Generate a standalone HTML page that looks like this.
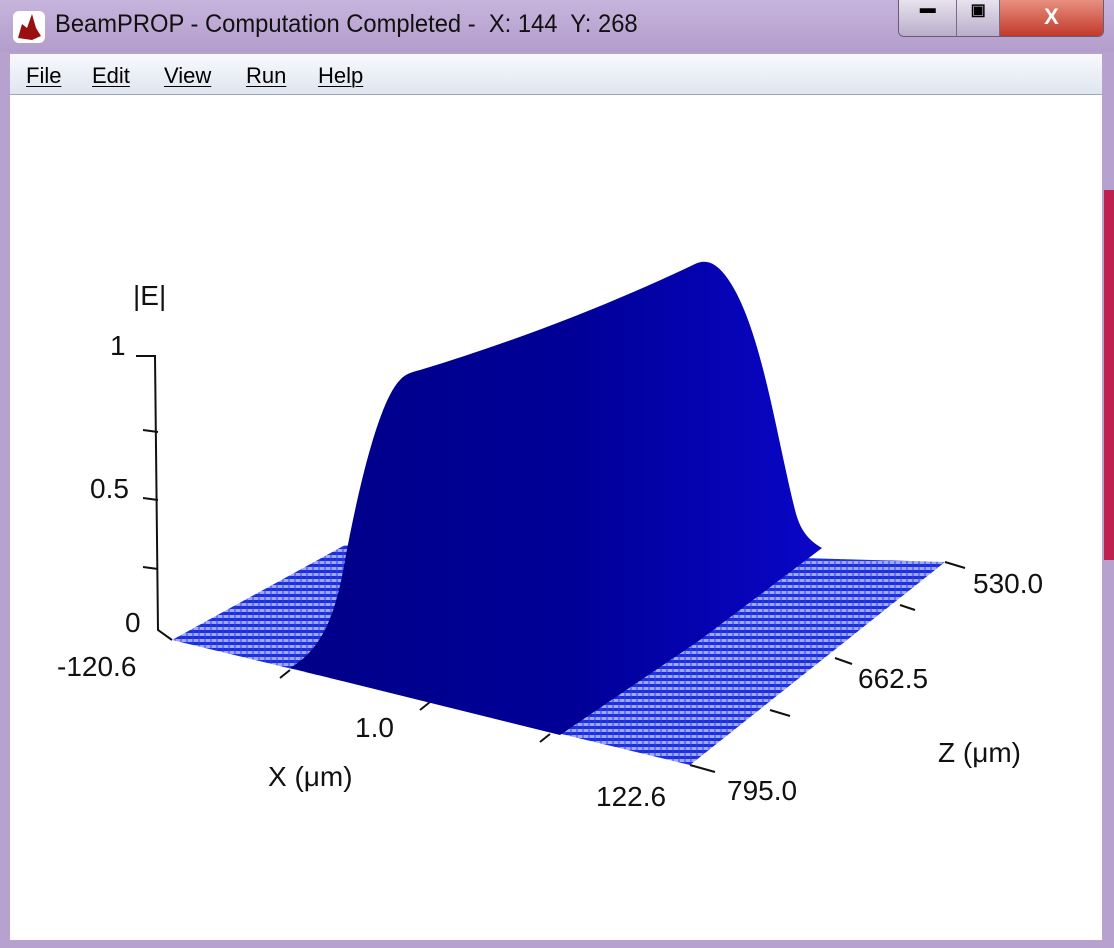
<!DOCTYPE html>
<html><head><meta charset="utf-8"><style>
body{margin:0;width:1114px;height:948px;overflow:hidden;background:#b7a2cf;font-family:"Liberation Sans",sans-serif;position:relative}
.title{position:absolute;left:0;top:0;width:1114px;height:52px;background:linear-gradient(#c7b4dc,#b39dcc)}
.tt{position:absolute;left:55px;top:10px;font-size:25px;color:#111;transform:scaleX(0.95);transform-origin:left}
.btns{position:absolute;left:898px;top:0;width:204px;height:36px;border:1px solid #6a5a7a;border-top:none;border-radius:0 0 6px 6px;overflow:hidden;display:flex}
.btns div{height:36px;background:linear-gradient(#e8e2ee,#b9aeca);border-right:1px solid #7a6a8a;text-align:center;font-weight:bold}
.menu{position:absolute;left:10px;top:54px;width:1092px;height:40px;background:linear-gradient(#f8f9fc,#dfe6f0);border-bottom:1px solid #a0a8b8;font-size:22px}
.menu span{position:absolute;top:9px;text-decoration:underline;text-decoration-thickness:1px;text-underline-offset:3px}
.client{position:absolute;left:10px;top:95px;width:1092px;height:845px;background:#fff}
.r{position:absolute;right:0;top:190px;width:10px;height:370px;background:#c02050}
svg text{font-family:"Liberation Sans",sans-serif;font-size:28px;fill:#111}
</style></head><body>
<div class="title">
<svg style="position:absolute;left:12px;top:10px" width="34" height="34" viewBox="0 0 34 34"><rect x="1" y="1" width="32" height="32" rx="6" fill="#fff"/><path d="M6 28 L10 14 L15 18 L20 4 L24 18 L29 26 L20 30 Z" fill="#9a1010"/></svg>
<div class="tt">BeamPROP - Computation Completed -&nbsp; X: 144&nbsp; Y: 268</div>
<div class="btns"><div style="width:58px">&#9644;</div><div style="width:42px">&#9635;</div><div style="width:104px;background:linear-gradient(#e89080,#c0392b);color:#fff;font-size:22px;line-height:34px;border:none">X</div></div>
</div>
<div class="r"></div>
<div class="menu"><span style="left:16px">File</span><span style="left:82px">Edit</span><span style="left:154px">View</span><span style="left:236px">Run</span><span style="left:308px">Help</span></div>
<div class="client"></div>
<svg style="position:absolute;left:0;top:0" width="1114" height="948">
<defs><pattern id="h" width="6" height="6" patternUnits="userSpaceOnUse"><rect width="6" height="6" fill="#a0a8f2"/><rect y="0" width="6" height="3" fill="#1a2ee0"/><rect x="0" width="2" height="6" fill="#2a3ee8" opacity=".5"/></pattern>
<linearGradient id="g" x1="0" y1="0" x2="1" y2="0"><stop offset="0" stop-color="#000088"/><stop offset=".55" stop-color="#000098"/><stop offset="1" stop-color="#0a06c8"/></linearGradient></defs>
<polygon points="172,640 345,545 945,562 690,765" fill="url(#h)"/>
<path d="M290,668 C320,650 335,620 345,560 C360,480 380,400 400,380 C405,374 412,372 420,370 C520,340 620,300 695,264 C705,259 715,262 725,275 C760,320 775,430 795,510 C800,530 808,540 822,548 L700,640 L560,735 Z" fill="url(#g)"/>
<g stroke="#111" stroke-width="2" fill="none">
<polyline points="136,356 155,356 158,630 172,640"/>
<line x1="143" y1="430" x2="158" y2="432"/><line x1="143" y1="498" x2="158" y2="500"/><line x1="143" y1="567" x2="158" y2="569"/>
<line x1="280" y1="678" x2="290" y2="670"/><line x1="420" y1="710" x2="430" y2="702"/><line x1="540" y1="742" x2="550" y2="734"/>
<line x1="690" y1="765" x2="715" y2="772"/><line x1="770" y1="710" x2="790" y2="716"/><line x1="835" y1="658" x2="852" y2="664"/><line x1="900" y1="605" x2="915" y2="610"/><line x1="945" y1="562" x2="965" y2="568"/>
</g>
<text x="133" y="305">|E|</text><text x="110" y="355">1</text><text x="90" y="498">0.5</text><text x="125" y="632">0</text>
<text x="57" y="676">-120.6</text><text x="355" y="737">1.0</text><text x="268" y="786">X (μm)</text>
<text x="596" y="806">122.6</text><text x="727" y="800">795.0</text><text x="858" y="688">662.5</text><text x="973" y="593">530.0</text><text x="938" y="762">Z (μm)</text>
</svg>
</body></html>
